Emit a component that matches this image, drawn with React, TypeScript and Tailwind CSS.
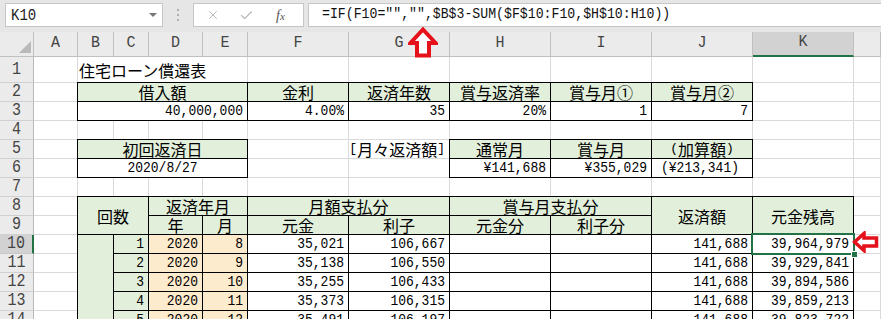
import React from "react";
import { X, Check } from "lucide-react";

type Cell = {
  c?: React.ReactNode;
  s?: 2 | 4;
  r?: 2 | 5;
  t?: boolean;
  f?: "g" | "o";
  a?: "l" | "c" | "r";
  sel?: boolean;
  pr?: boolean;
};

const J = ({ children }: { children: React.ReactNode }) => (
  <span className="font-['Noto_Sans_CJK_JP',sans-serif] text-[16px] leading-[16px]">{children}</span>
);

const blanks = (n: number): Cell[] => Array.from({ length: n }, () => ({}));

const g = (text: React.ReactNode, extra: Partial<Cell> = {}): Cell => ({ t: true, f: "g", a: "c", c: text, ...extra });

const dataRow = (
  n: string,
  y: string,
  m: string,
  p: string,
  i: string,
  pay: string,
  bal: string,
  first: boolean,
  sel = false
): Cell[] => [
  {},
  ...(first ? [{ t: true, f: "g", r: 5 } as Cell] : []),
  { t: true, f: "g", a: "r", c: n },
  { t: true, f: "o", a: "r", c: y },
  { t: true, f: "o", a: "r", c: m },
  { t: true, a: "r", c: p },
  { t: true, a: "r", c: i },
  { t: true },
  { t: true },
  { t: true, a: "r", c: pay },
  { t: true, a: "r", c: bal, sel },
  {},
];

const rows: Cell[][] = [
  [{}, { s: 4, a: "l", c: <J>住宅ローン償還表</J> }, ...blanks(7)],
  [
    {},
    g(<J>借入額</J>, { s: 4 }),
    g(<J>金利</J>),
    g(<J>返済年数</J>),
    g(<J>賞与返済率</J>),
    g(<J>賞与月①</J>),
    g(<J>賞与月②</J>),
    {},
    {},
  ],
  [
    {},
    { s: 4, t: true, a: "r", c: "40,000,000" },
    { t: true, a: "r", c: "4.00%" },
    { t: true, a: "r", c: "35" },
    { t: true, a: "r", c: "20%" },
    { t: true, a: "r", c: "1" },
    { t: true, a: "r", c: "7" },
    {},
    {},
  ],
  blanks(12),
  [
    {},
    g(<J>初回返済日</J>, { s: 4 }),
    {},
    { a: "r", c: <>[<J>月々返済額</J>]</> },
    g(<J>通常月</J>),
    g(<J>賞与月</J>),
    g(<>(<J>加算額</J>)</>),
    {},
    {},
  ],
  [
    {},
    { s: 4, t: true, a: "c", c: "2020/8/27" },
    {},
    {},
    { t: true, a: "r", c: "¥141,688" },
    { t: true, a: "r", c: "¥355,029" },
    { t: true, a: "r", c: "(¥213,341)", pr: true },
    {},
    {},
  ],
  blanks(12),
  [
    {},
    g(<J>回数</J>, { s: 2, r: 2 }),
    g(<J>返済年月</J>, { s: 2 }),
    g(<J>月額支払分</J>, { s: 2 }),
    g(<J>賞与月支払分</J>, { s: 2 }),
    g(<J>返済額</J>, { r: 2 }),
    g(<J>元金残高</J>, { r: 2 }),
    {},
  ],
  [{}, g(<J>年</J>), g(<J>月</J>), g(<J>元金</J>), g(<J>利子</J>), g(<J>元金分</J>), g(<J>利子分</J>), {}],
  dataRow("1", "2020", "8", "35,021", "106,667", "141,688", "39,964,979", true, true),
  dataRow("2", "2020", "9", "35,138", "106,550", "141,688", "39,929,841", false),
  dataRow("3", "2020", "10", "35,255", "106,433", "141,688", "39,894,586", false),
  dataRow("4", "2020", "11", "35,373", "106,315", "141,688", "39,859,213", false),
  dataRow("5", "2020", "12", "35,491", "106,197", "141,688", "39,823,722", false),
];

const rowLabels = ["1", "2", "3", "4", "5", "6", "7", "8", "9", "10", "11", "12", "13", "14"];
const colLetters = ["A", "B", "C", "D", "E", "F", "G", "H", "I", "J", "K", ""];

function SheetCell({ cell }: { cell: Cell }) {
  const span = cell.s === 4 ? "col-span-4" : cell.s === 2 ? "col-span-2" : "";
  const rs = cell.r === 2 ? "row-span-2" : cell.r === 5 ? "row-span-5" : "";
  const bg = cell.f === "g" ? "bg-[#e2efda]" : cell.f === "o" ? "bg-[#fdebcd]" : "bg-white";
  const border = cell.t
    ? `relative ${cell.sel ? "z-20" : "z-10"} -ml-px -mt-px border border-black`
    : "border-r border-b border-[#dadada]";
  const align =
    cell.a === "c"
      ? "justify-center"
      : cell.a === "l"
      ? "justify-start pl-px"
      : cell.pr
      ? "justify-end pr-[13px]"
      : "justify-end pr-[4px]";
  return (
    <div
      className={`${span} ${rs} ${bg} ${border} flex items-center ${align} whitespace-nowrap text-[13px] leading-[16px] text-black`}
    >
      {typeof cell.c === "string" ? (
        <span className="inline-block origin-center scale-y-[1.18]">{cell.c}</span>
      ) : (
        cell.c
      )}
      {cell.sel && (
        <>
          <div className="absolute -left-[2px] -top-[2px] -right-[2px] -bottom-[2px] border-2 border-[#217346]" />
          <div className="absolute -right-[5px] -bottom-[5px] h-[7px] w-[7px] border border-white bg-[#217346]" />
        </>
      )}
    </div>
  );
}

function UpArrow() {
  return (
    <svg width="30" height="31" viewBox="0 0 30 31" className="absolute left-[408px] top-[27px] z-30">
      <polygon
        points="15,2.5 27.5,16 21,16 21,28.5 9,28.5 9,16 2.5,16"
        fill="white"
        stroke="#e5121b"
        strokeWidth="4"
        strokeLinejoin="miter"
      />
    </svg>
  );
}

function LeftArrow() {
  return (
    <svg width="27" height="22" viewBox="0 0 27 22" className="absolute left-[852px] top-[231px] z-30">
      <polygon
        points="2.5,11 12,2.5 12,7 24.5,7 24.5,15 12,15 12,19.5"
        fill="white"
        stroke="#e5121b"
        strokeWidth="3.5"
        strokeLinejoin="miter"
      />
    </svg>
  );
}

export default function App() {
  return (
    <div className="relative h-[319px] w-[881px] overflow-hidden bg-white font-['Liberation_Mono','Noto_Sans_CJK_JP',monospace]">
      {/* Formula bar */}
      <div className="flex h-[32px] items-start bg-[#e6e6e6] pt-[3px]">
        <div className="ml-[5px] flex h-[24px] w-[158px] items-center justify-between border border-[#c6c6c6] bg-white pl-[5px] pr-[5px]">
          <span className="inline-block scale-y-[1.15] text-[14px] text-[#222]">K10</span>
          <svg width="8" height="5" viewBox="0 0 8 5">
            <polygon points="0,0 8,0 4,4" fill="#777" />
          </svg>
        </div>
        <div className="flex h-[24px] w-[30px] flex-col items-center justify-center gap-[3px]">
          <span className="h-[2px] w-[2px] bg-[#b0b0b0]" />
          <span className="h-[2px] w-[2px] bg-[#b0b0b0]" />
          <span className="h-[2px] w-[2px] bg-[#b0b0b0]" />
        </div>
        <div className="flex h-[24px] w-[111px] items-center border border-[#c6c6c6] bg-white">
          <X size={14} strokeWidth={1.6} className="ml-[12px] text-[#b4b4b4]" />
          <Check size={15} strokeWidth={1.8} className="ml-[19px] text-[#b4b4b4]" />
          <span className="ml-[22px] font-['Liberation_Serif',serif] text-[14px] italic text-[#555]">
            f<span className="text-[11px]">x</span>
          </span>
        </div>
        <div className="ml-[4px] flex h-[24px] flex-1 items-center border-y border-l border-[#c6c6c6] bg-white pl-[13px]">
          <span className="inline-block scale-y-[1.15] text-[13.2px] text-[#111]">
            =IF(F10="","",$B$3-SUM($F$10:F10,$H$10:H10))
          </span>
        </div>
      </div>

      {/* Sheet grid */}
      <div className="grid grid-cols-[34px_44px_36px_35px_54px_45px_101px_101px_101px_101px_101px_101px_1fr] grid-rows-[25px_26px_repeat(13,19px)]">
        {/* header row */}
        <div className="relative border-r border-b border-[#c0c0c0] bg-[#ebebeb]">
          <svg width="12" height="12" viewBox="0 0 12 12" className="absolute bottom-[3px] right-[2px]">
            <polygon points="12,0 12,12 0,12" fill="#b9b9b9" />
          </svg>
        </div>
        {colLetters.map((l, i) => (
          <div
            key={l + i}
            className={`flex items-center justify-center text-[15px] text-[#444] ${
              l === "K"
                ? "border-r border-b-2 border-r-[#c0c0c0] border-b-[#217346] bg-[#d2d2d2]"
                : "border-r border-b border-[#c0c0c0] bg-[#ebebeb]"
            }`}
          >
            <span className="inline-block scale-y-[1.15]">{l}</span>
          </div>
        ))}
        {rows.map((row, ri) => (
          <React.Fragment key={ri}>
            <div
              className={`flex items-center justify-center text-[15px] leading-[16px] text-[#444] ${
                ri === 9
                  ? "border-r-2 border-b border-r-[#217346] border-b-[#c8c8c8] bg-[#d2d2d2]"
                  : "border-r border-b border-r-[#b8b8b8] border-b-[#d0d0d0] bg-[#ebebeb]"
              }`}
            >
              <span className="inline-block scale-y-[1.2]">{rowLabels[ri]}</span>
            </div>
            {row.map((cell, ci) => (
              <SheetCell key={ci} cell={cell} />
            ))}
          </React.Fragment>
        ))}
      </div>

      <UpArrow />
      <LeftArrow />
    </div>
  );
}
